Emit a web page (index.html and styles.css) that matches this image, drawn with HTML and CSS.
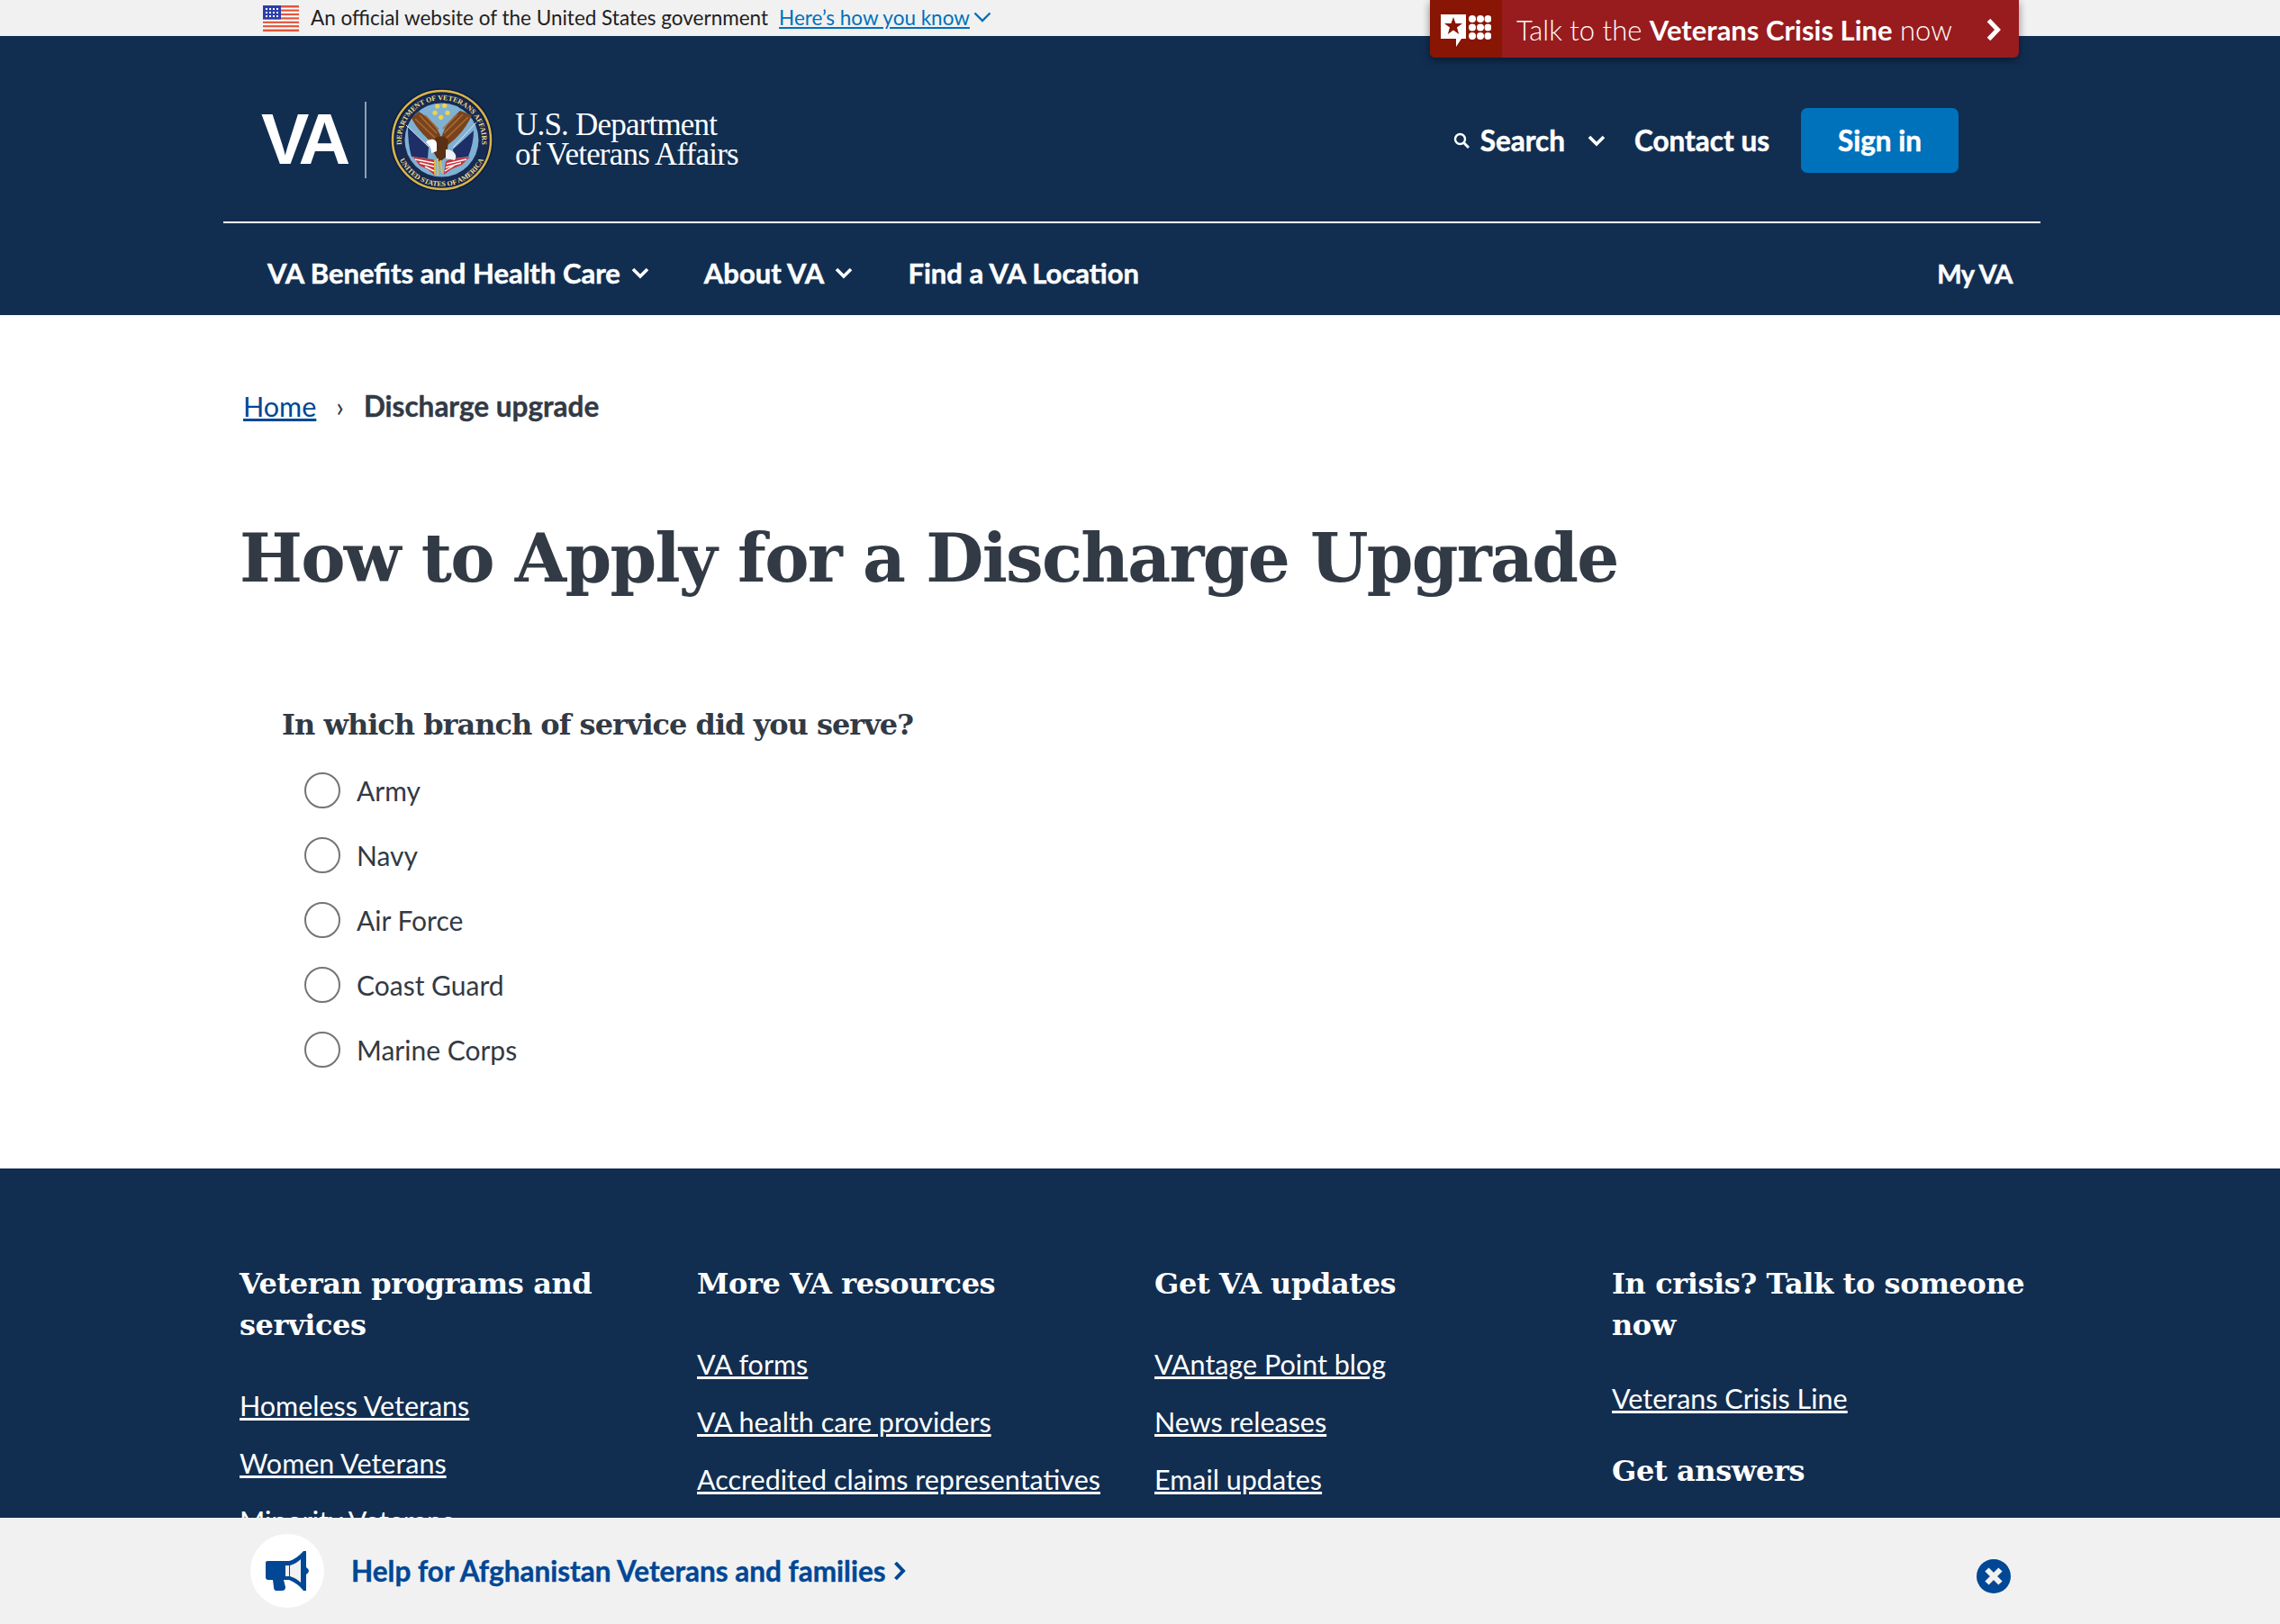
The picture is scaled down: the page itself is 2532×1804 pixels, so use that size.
FILE: index.html
```html
<!DOCTYPE html>
<html lang="en">
<head>
    <meta charset="UTF-8">
    <meta name="viewport" content="width=device-width, initial-scale=1.0">
    <title>How to Apply for a Discharge Upgrade</title>
    <link rel="stylesheet" href="styles.css">
</head>
<body>
    <div class="gov-banner">
        <svg class="flag" viewBox="0 0 40 29" aria-hidden="true">
            <rect width="40" height="29" fill="#fff"/>
            <g fill="#e2553b">
                <rect y="0" width="40" height="2.5"/>
                <rect y="4.5" width="40" height="2.2"/>
                <rect y="8.9" width="40" height="2.2"/>
                <rect y="13.3" width="40" height="2.2"/>
                <rect y="17.7" width="40" height="2.2"/>
                <rect y="22.1" width="40" height="2.2"/>
                <rect y="26.5" width="40" height="2.5"/>
            </g>
            <rect width="20" height="15.5" fill="#2c3fa8"/>
            <g fill="#fff">
                <rect x="3" y="3" width="2" height="2"/><rect x="7" y="3" width="2" height="2"/><rect x="11" y="3" width="2" height="2"/><rect x="15" y="3" width="2" height="2"/>
                <rect x="3" y="7" width="2" height="2"/><rect x="7" y="7" width="2" height="2"/><rect x="11" y="7" width="2" height="2"/><rect x="15" y="7" width="2" height="2"/>
                <rect x="3" y="11" width="2" height="2"/><rect x="7" y="11" width="2" height="2"/><rect x="11" y="11" width="2" height="2"/><rect x="15" y="11" width="2" height="2"/>
            </g>
        </svg>
        <span class="gov-text">An official website of the United States government</span>
        <a class="gov-link" href="#">Here’s how you know</a>
        <svg class="gov-chevron" viewBox="0 0 20 12" aria-hidden="true"><path d="M1.5 1.5 L10 10 L18.5 1.5" fill="none" stroke="#0071bb" stroke-width="2.4"/></svg>
    </div>

    <a class="crisis" href="#">
        <span class="crisis-icon">
            <svg viewBox="0 0 56 36" width="56" height="36" aria-hidden="true">
                <path d="M0 0 H28 V27 H23 L17 36 L17 27 H0 Z" fill="#fff"/>
                <polygon points="14,3 16.500,10 24,10 18,14.500 20.200,22 14,17.500 7.800,22 10,14.500 4,10 11.500,10" fill="#891505"/>
                <g fill="#fff">
                    <circle cx="35" cy="5" r="4"/><circle cx="44" cy="5" r="4"/><circle cx="52.500" cy="5" r="4"/>
                    <circle cx="35" cy="14.500" r="4"/><circle cx="44" cy="14.500" r="4"/><circle cx="52.500" cy="14.500" r="4"/>
                    <circle cx="35" cy="24" r="4"/><circle cx="44" cy="24" r="4"/><circle cx="52.500" cy="24" r="4"/>
                </g>
            </svg>
        </span>
        <span class="crisis-text">Talk to the <b>Veterans Crisis Line</b> now</span>
        <svg class="crisis-chevron" viewBox="0 0 18 26" aria-hidden="true"><path d="M3.500 2.500 L13.500 13 L3.500 23.500" fill="none" stroke="#fff" stroke-width="5"/></svg>
    </a>

    <header class="site-header">
        <div class="header-inner">
            <div class="header-top">
                <div class="logo">
                    <span class="logo-va">VA</span>
                    <span class="logo-rule"></span>
                    <svg class="seal" viewBox="0 0 115 115" aria-hidden="true">
                        <circle cx="57.500" cy="57.500" r="57.500" fill="#0d1f44"/>
                        <circle cx="57.500" cy="57.500" r="54.500" fill="none" stroke="#d9b44a" stroke-width="2.500"/>
                        <circle cx="57.500" cy="57.500" r="52" fill="#162a52"/>
                        <defs>
                            <path id="sealTop" d="M13 62 A44.700 44.700 0 1 1 102 62"/>
                            <path id="sealBottom" d="M9.100 75.100 A51.500 51.500 0 0 0 105.900 75.100"/>
                        </defs>
                        <text class="seal-text"><textPath href="#sealTop" startOffset="50%" text-anchor="middle">DEPARTMENT OF VETERANS AFFAIRS</textPath></text>
                        <text class="seal-text"><textPath href="#sealBottom" startOffset="50%" text-anchor="middle">UNITED STATES OF AMERICA</textPath></text>
                        <circle cx="57.500" cy="57.500" r="41" fill="#7fb1d3"/>
                        <!-- flags -->
                        <path d="M20 43 L43 65 L42 78 L24 76 C21 66 20 54 20 43 Z" fill="#1d2f66"/>
                        <path d="M93 47 L70 68 L71 78 L87 76 C91 66 93 56 93 47 Z" fill="#1d2f66"/>
                        <path d="M18 41 L43 65 M96 38 L70 66" stroke="#dfe6ec" stroke-width="1"/>
                        <path d="M25 75 C33 79 42 77 50 80 L50 97 L42 90 L33 86 Z" fill="#c8323a"/>
                        <path d="M89 76 C81 79 70 76 62 81 L60 96 L68 90 L80 85 Z" fill="#c8323a"/>
                        <path d="M28 79 L49 83 M33 83 L49 87 M39 87 L49 92 M85 79 L63 84 M79 83 L62 88 M71 86 L61 92" stroke="#fff" stroke-width="1.400"/>
                        <!-- eagle -->
                        <path d="M24 33 L32 26 C42 32 50 40 56 52 L52 66 C42 56 30 46 24 33 Z" fill="#7a431c"/>
                        <path d="M91 30 L78 25 C70 32 62 40 58 52 L60 66 C72 58 84 46 91 30 Z" fill="#7a431c"/>
                        <path d="M28 34 L50 55 M33 30 L52 50 M39 30 L54 46 M87 32 L62 56 M81 29 L60 50 M75 29 L59 45" stroke="#a86a33" stroke-width="1.600"/>
                        <path d="M50 56 C54 52 62 52 65 58 L63 76 L55 82 L49 72 Z" fill="#5a2f14"/>
                        <path d="M40 60 C44 55 52 56 52 62 L52 70 L46 72 C46 66 44 64 40 60 Z" fill="#fff"/>
                        <path d="M62 68 C70 68 76 74 72 80 L62 78 Z" fill="#eef2f6"/>
                        <path d="M50 80 L50 96 M53 78 L53 97 M56 80 L58 94" stroke="#e8bc38" stroke-width="1.800"/>
                        <!-- stars -->
                        <g fill="#f1d24b">
                            <circle cx="52.700" cy="20" r="2.600"/><circle cx="60.700" cy="19.300" r="2.600"/>
                            <circle cx="50" cy="27.300" r="2.600"/><circle cx="64" cy="27.300" r="2.600"/><circle cx="56.700" cy="32.300" r="2.600"/>
                        </g>
                    </svg>
                    <div class="logo-name">U.S. Department<br>of Veterans Affairs</div>
                </div>
                <div class="header-actions">
                    <svg class="search-icon" viewBox="0 0 18 18" aria-hidden="true"><circle cx="7.500" cy="7.500" r="5.500" fill="none" stroke="#fff" stroke-width="2.400"/><path d="M11.500 11.500 L17 17" stroke="#fff" stroke-width="3"/></svg>
                    <span class="search-label">Search</span>
                    <svg class="chevron search-chevron" viewBox="0 0 20 13" aria-hidden="true"><path d="M2 2 L10 10 L18 2" fill="none" stroke="#fff" stroke-width="3.600"/></svg>
                    <a class="contact-link" href="#">Contact us</a>
                    <a class="sign-in" href="#">Sign in</a>
                </div>
            </div>
            <nav class="main-nav">
                <a class="nav-item" href="#">VA Benefits and Health Care<svg class="chevron" viewBox="0 0 20 13" aria-hidden="true"><path d="M2 2 L10 10 L18 2" fill="none" stroke="#fff" stroke-width="3.600"/></svg></a>
                <a class="nav-item" href="#">About VA<svg class="chevron" viewBox="0 0 20 13" aria-hidden="true"><path d="M2 2 L10 10 L18 2" fill="none" stroke="#fff" stroke-width="3.600"/></svg></a>
                <a class="nav-item" href="#">Find a VA Location</a>
                <a class="nav-item nav-right" href="#">My VA</a>
            </nav>
        </div>
    </header>

    <main class="content">
        <div class="breadcrumb">
            <a href="#">Home</a>
            <span class="crumb-sep">›</span>
            <strong>Discharge upgrade</strong>
        </div>
        <h1>How to Apply for a Discharge Upgrade</h1>
        <fieldset class="question">
            <legend>In which branch of service did you serve?</legend>
            <div class="radio-row"><span class="radio"></span><span>Army</span></div>
            <div class="radio-row"><span class="radio"></span><span>Navy</span></div>
            <div class="radio-row"><span class="radio"></span><span>Air Force</span></div>
            <div class="radio-row"><span class="radio"></span><span>Coast Guard</span></div>
            <div class="radio-row"><span class="radio"></span><span>Marine Corps</span></div>
        </fieldset>
    </main>

    <footer class="site-footer">
        <div class="footer-col">
            <h4>Veteran programs and services</h4>
            <a href="#">Homeless Veterans</a>
            <a href="#">Women Veterans</a>
            <a href="#">Minority Veterans</a>
        </div>
        <div class="footer-col">
            <h4>More VA resources</h4>
            <a href="#">VA forms</a>
            <a href="#">VA health care providers</a>
            <a href="#">Accredited claims representatives</a>
        </div>
        <div class="footer-col">
            <h4>Get VA updates</h4>
            <a href="#">VAntage Point blog</a>
            <a href="#">News releases</a>
            <a href="#">Email updates</a>
        </div>
        <div class="footer-col">
            <h4>In crisis? Talk to someone now</h4>
            <a class="crisis-link" href="#">Veterans Crisis Line</a>
            <h4 class="answers">Get answers</h4>
        </div>
    </footer>

    <div class="promo">
        <span class="promo-circle">
            <svg viewBox="0 0 48 44" width="48" height="44" aria-hidden="true">
                <path d="M0 13 Q0 11 2 11 L26 11 Q34 9 42 0 L45 0 L45 18 Q48 20 48 22 Q48 24 45 26 L45 44 L42 44 Q36 36 26 32 L20 32 L22 40 Q22 44 18 44 L12 44 Q9 44 9 40 L8 32 L3 32 Q0 32 0 29 Z" fill="#004795"/>
                <path d="M22 16 L22 28 L27 28 Q34 30 39 35 L39 9 Q34 14 27 16 Z" fill="#f1f1f1"/>
                <path d="M26 16 L26 28 L27 28 L27 16 Z" fill="#004795"/>
            </svg>
        </span>
        <a class="promo-link" href="#">Help for Afghanistan Veterans and families</a>
        <svg class="promo-chevron" viewBox="0 0 14 22" aria-hidden="true"><path d="M2.500 2 L11 11 L2.500 20" fill="none" stroke="#004795" stroke-width="4"/></svg>
        <span class="promo-close">
            <svg viewBox="0 0 38 38" width="38" height="38" aria-hidden="true">
                <circle cx="19" cy="19" r="19" fill="#004795"/>
                <path d="M11.500 11.500 L26.500 26.500 M26.500 11.500 L11.500 26.500" stroke="#f1f1f1" stroke-width="6"/>
            </svg>
        </span>
    </div>
</body>
</html>
```

FILE: styles.css
```css
html, body {
    height: 100%;
}

body {
    margin: 0;
    overflow: hidden;
    background: #fff;
    color: #323a45;
    font-family: Lato, "Noto Sans", sans-serif;
    font-size: 30.5px;
}

a {
    color: inherit;
}

/* top banner */
.gov-banner {
    height: 40px;
    box-sizing: border-box;
    background: #f1f1f1;
    padding: 0 0 2px 292px;
    display: flex;
    align-items: center;
    font-size: 22.5px;
    color: #212121;
}

.flag {
    width: 40px;
    height: 29px;
    margin: 2px 13px 0 0;
}

.gov-text {
    margin-right: 12px;
}

.gov-link {
    color: #0071bb;
}

.gov-chevron {
    width: 20px;
    height: 12px;
    margin-left: 4px;
}

.crisis {
    position: absolute;
    top: 0;
    left: 1588px;
    width: 654px;
    height: 64px;
    display: flex;
    align-items: center;
    background: #981b1e;
    color: #fff;
    text-decoration: none;
    border-radius: 0 0 6px 6px;
    box-shadow: 0 3px 10px rgba(0, 0, 0, 0.45);
    font-size: 31px;
    font-weight: 300;
}

.crisis-icon {
    width: 80px;
    height: 64px;
    box-sizing: border-box;
    padding-left: 12px;
    padding-top: 16px;
    background: #891505;
    border-radius: 0 0 0 6px;
    display: flex;
    align-items: flex-start;
    margin-right: 16px;
}

.crisis-text {
    padding-top: 2px;
}

.crisis-text b {
    font-weight: 700;
}

.crisis-chevron {
    width: 18px;
    height: 26px;
    position: absolute;
    left: 617px;
    top: 20px;
}

/* header */
.site-header {
    height: 310px;
    background: #112e51;
    color: #fff;
}

.header-inner {
    width: 2018px;
    margin-left: 248px;
}

.header-top {
    height: 206px;
    border-bottom: 2px solid #fff;
    display: flex;
    align-items: center;
    justify-content: space-between;
}

.logo {
    display: flex;
    align-items: center;
    padding-left: 42px;
    margin-top: 24px;
}

.logo-va {
    font-family: "Liberation Sans", sans-serif;
    font-weight: 700;
    font-size: 80px;
    line-height: 90px;
    letter-spacing: -6px;
    width: 98px;
}

.logo-rule {
    width: 2px;
    height: 85px;
    background: #8f9fb3;
    margin: 0 26px 0 17px;
}

.seal {
    width: 115px;
    height: 115px;
    margin-right: 24px;
}

.seal-text {
    font-family: "Liberation Serif", serif;
    font-size: 8px;
    font-weight: 700;
    fill: #f2dd8b;
}

.logo-name {
    font-family: "Liberation Serif", serif;
    font-size: 35px;
    line-height: 33px;
    letter-spacing: -0.8px;
}

.header-actions {
    display: flex;
    align-items: center;
    font-weight: 700;
    font-size: 31.5px;
    -webkit-text-stroke: 0.5px #fff;
    padding-right: 91px;
    margin-top: 26px;
}

.search-icon {
    width: 18px;
    height: 18px;
    margin-right: 12px;
}

.search-chevron {
    margin-left: 25px;
    margin-right: 32px;
}

.contact-link {
    text-decoration: none;
}

.sign-in {
    width: 175px;
    height: 72px;
    margin-left: 35px;
    background: #0071bb;
    border-radius: 7px;
    display: flex;
    align-items: center;
    justify-content: center;
    text-decoration: none;
}

.chevron {
    width: 20px;
    height: 13px;
}

.main-nav {
    display: flex;
    align-items: center;
    height: 102px;
    box-sizing: border-box;
    padding: 8px 31px 0 49px;
    gap: 61px;
    font-weight: 700;
    font-size: 31px;
    -webkit-text-stroke: 0.5px #fff;
}

.nav-item {
    text-decoration: none;
    display: flex;
    align-items: center;
    gap: 12px;
}

.nav-right {
    margin-left: auto;
    font-size: 29px;
    letter-spacing: -0.5px;
}

/* main content */
.content {
    height: 948px;
    padding-left: 266px;
    box-sizing: border-box;
}

.breadcrumb {
    padding-top: 81px;
    padding-left: 4px;
    line-height: 40px;
    display: flex;
    gap: 22px;
}

.breadcrumb a {
    color: #004795;
}

.breadcrumb strong {
    font-size: 31.5px;
    -webkit-text-stroke: 0.4px #323a45;
}

h1 {
    margin: 99px 0 0;
    font-family: "DejaVu Serif", serif;
    font-weight: 700;
    font-size: 74px;
    letter-spacing: -1.75px;
    line-height: 100px;
}

.question {
    border: 0;
    margin: 113px 0 0 47px;
    padding: 0;
}

.question legend {
    padding: 0;
    font-family: "DejaVu Serif", serif;
    font-weight: 700;
    font-size: 32px;
    letter-spacing: -1px;
    line-height: 44px;
    margin-bottom: 15px;
}

.radio-row {
    height: 72px;
    display: flex;
    align-items: center;
    padding-left: 25px;
    gap: 18px;
    font-size: 30px;
}

.radio {
    width: 36px;
    height: 36px;
    border: 2px solid #757575;
    border-radius: 50%;
    background: #fff;
}

/* footer */
.site-footer {
    height: 506px;
    box-sizing: border-box;
    background: #112e51;
    color: #fff;
    padding: 105px 0 0 266px;
    display: grid;
    grid-template-columns: repeat(4, 508px);
    overflow: hidden;
}

.footer-col {
    width: 490px;
}

.footer-col h4 {
    margin: 0 0 34px;
    font-family: "DejaVu Serif", serif;
    font-weight: 700;
    font-size: 32px;
    letter-spacing: -0.4px;
    line-height: 46px;
}

.footer-col a {
    display: block;
    line-height: 64px;
    white-space: nowrap;
}

.footer-col .crisis-link {
    margin-top: -8px;
}

.footer-col .answers {
    margin-top: 26px;
}

/* bottom promo bar */
.promo {
    position: fixed;
    left: 0;
    right: 0;
    bottom: 0;
    height: 118px;
    background: #f1f1f1;
    display: flex;
    align-items: center;
    padding-left: 278px;
    font-weight: 700;
    font-size: 31.5px;
    -webkit-text-stroke: 0.4px #004795;
    color: #004795;
}

.promo-circle {
    width: 82px;
    height: 82px;
    border-radius: 50%;
    background: #fff;
    display: flex;
    align-items: center;
    justify-content: center;
    margin-right: 30px;
}

.promo-link {
    text-decoration: none;
}

.promo-chevron {
    width: 14px;
    height: 22px;
    margin-left: 8px;
}

.promo-close {
    position: absolute;
    left: 2195px;
    top: 46px;
    width: 38px;
    height: 38px;
}
```
